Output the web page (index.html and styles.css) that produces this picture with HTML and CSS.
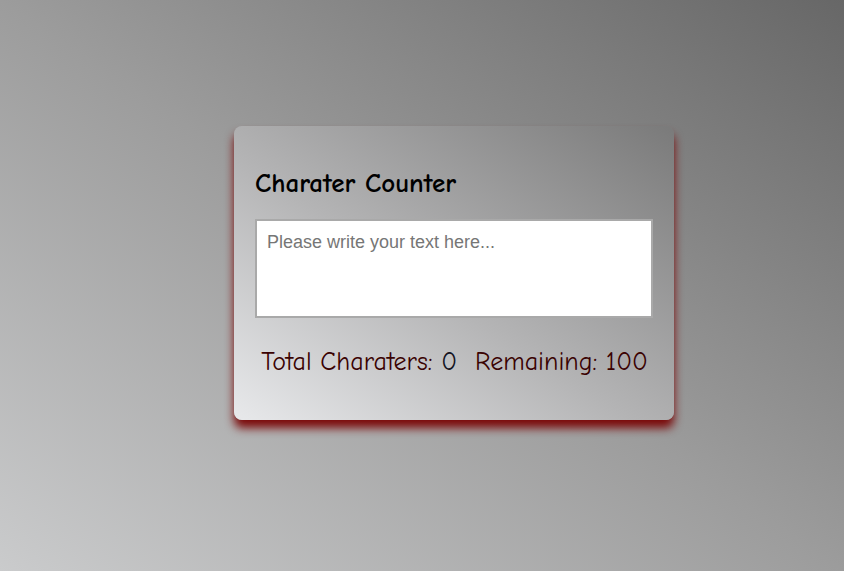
FILE: index.html
```html
<!DOCTYPE html>
<html>
<head>
<meta charset="utf-8">
<link rel="stylesheet" href="styles.css">
</head>
<body>
<div class="card">
  <h2 class="title">Charater Counter</h2>
  <textarea class="input" placeholder="Please write your text here..."></textarea>
  <div class="stats">
    <span class="stat">Total Charaters: <span class="num">0</span></span>
    <span class="stat">Remaining: <span class="rem">100</span></span>
  </div>
</div>
</body>
</html>
```
FILE: styles.css
```css
html, body {
  margin: 0;
  height: 100%;
}
body {
  background: linear-gradient(to top right, #cacbcc 0%, #9c9c9c 50%, #676767 100%);
  padding: 126px 0 0 234px;
  box-sizing: border-box;
  font-family: "Comic Sans MS", "Comic Neue", "Open Sans", sans-serif;
}
.card {
  width: 440px;
  height: 294px;
  box-sizing: border-box;
  border-radius: 8px;
  padding: 43px 20px 0 21px;
  background: linear-gradient(to top right, #e8e9eb 0%, #b4b4b5 45%, #7a7a7a 100%);
  box-shadow: 0 8px 10px rgba(120, 0, 0, 0.95);
  display: flex;
  flex-direction: column;
}
.title {
  margin: 0 0 20px 0;
  font-size: 27px;
  font-weight: bold;
  line-height: 30px;
  color: #000;
}
.input {
  width: 398px;
  height: 99px;
  box-sizing: border-box;
  border: 2px solid #a9a9a9;
  padding: 11px 10px 9px;
  font-family: "Liberation Sans", Arial, sans-serif;
  font-size: 18px;
  resize: none;
  margin: 0;
  background: #fff;
}
.input::placeholder {
  color: #767676;
}
.stats {
  margin-top: 27px;
  display: flex;
  justify-content: center;
  gap: 18px;
  font-size: 26px;
  line-height: 34px;
  color: #3a0202;
}
.num {
  color: #141422;
}
.rem {
  color: #3a0202;
}
```
